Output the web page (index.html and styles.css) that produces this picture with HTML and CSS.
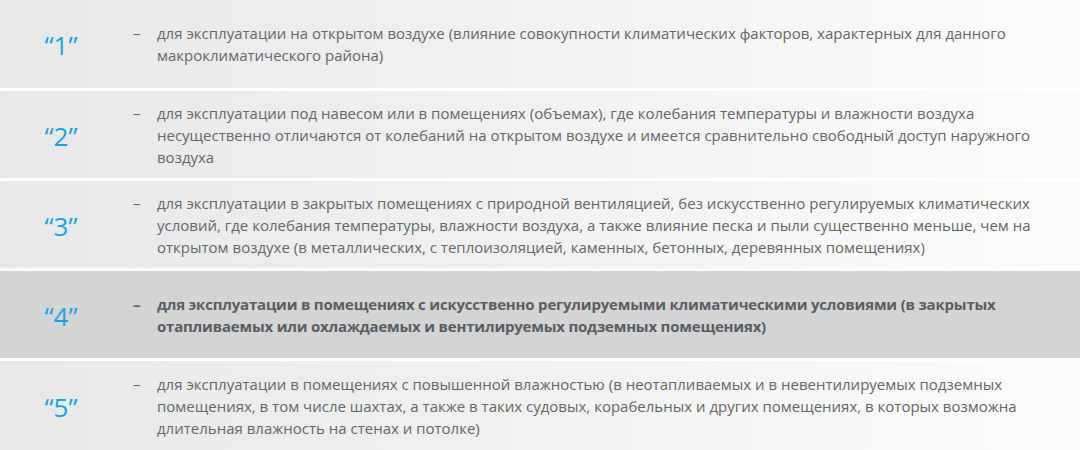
FILE: index.html
```html
<!DOCTYPE html>
<html lang="ru">
<head>
<meta charset="utf-8">
<link rel="stylesheet" href="styles.css">
</head>
<body>
<div class="list">
  <div class="row r1">
    <div class="num">“1”</div>
    <div class="body">
      <div class="dash">–</div>
      <div class="text">для эксплуатации на открытом воздухе (влияние совокупности климатических факторов, характерных для данного макроклиматического района)</div>
    </div>
  </div>
  <div class="row">
    <div class="num">“2”</div>
    <div class="body">
      <div class="dash">–</div>
      <div class="text">для эксплуатации под навесом или в помещениях (объемах), где колебания температуры и влажности воздуха несущественно отличаются от колебаний на открытом воздухе и имеется сравнительно свободный доступ наружного воздуха</div>
    </div>
  </div>
  <div class="row">
    <div class="num">“3”</div>
    <div class="body">
      <div class="dash">–</div>
      <div class="text">для эксплуатации в закрытых помещениях с природной вентиляцией, без искусственно регулируемых климатических условий, где колебания температуры, влажности воздуха, а также влияние песка и пыли существенно меньше, чем на открытом воздухе (в металлических, с теплоизоляцией, каменных, бетонных, деревянных помещениях)</div>
    </div>
  </div>
  <div class="row active">
    <div class="num">“4”</div>
    <div class="body">
      <div class="dash">–</div>
      <div class="text">для эксплуатации в помещениях с искусственно регулируемыми климатическими условиями (в закрытых отапливаемых или охлаждаемых и вентилируемых подземных помещениях)</div>
    </div>
  </div>
  <div class="row last">
    <div class="num">“5”</div>
    <div class="body">
      <div class="dash">–</div>
      <div class="text">для эксплуатации в помещениях с повышенной влажностью (в неотапливаемых и в невентилируемых подземных помещениях, в том числе шахтах, а также в таких судовых, корабельных и других помещениях, в которых возможна длительная влажность на стенах и потолке)</div>
    </div>
  </div>
</div>
</body>
</html>
```

FILE: styles.css
```css
html, body {
  margin: 0;
  padding: 0;
  background: #ffffff;
}
body {
  width: 1080px;
  height: 450px;
  overflow: hidden;
  font-family: "Open Sans", "Liberation Sans", sans-serif;
}
.list {
  display: flex;
  flex-direction: column;
  gap: 3px;
}
.row {
  height: 87px;
  display: flex;
  align-items: center;
  background: linear-gradient(to right, #e7e8e9 0%, #f1f1f2 50%, #fcfcfc 100%);
}
.row.r1 {
  height: 88px;
}
.row.last {
  height: 90px;
}
.row.active {
  background: #d3d4d6;
}
.num {
  width: 122px;
  flex: none;
  text-align: center;
  color: #1ca2e1;
  font-size: 26px;
  line-height: 30px;
  padding-top: 2px;
}
.body {
  display: flex;
  align-items: flex-start;
}
.dash {
  width: 35px;
  flex: none;
  box-sizing: border-box;
  padding-left: 11px;
  color: #6a6a6a;
  font-size: 15px;
  line-height: 22px;
}
.text {
  width: 880px;
  color: #666666;
  font-size: 15px;
  line-height: 22px;
}
.active .text,
.active .dash {
  font-weight: 700;
  color: #5c5c5c;
}
.active .text {
  letter-spacing: -0.2px;
}
```
